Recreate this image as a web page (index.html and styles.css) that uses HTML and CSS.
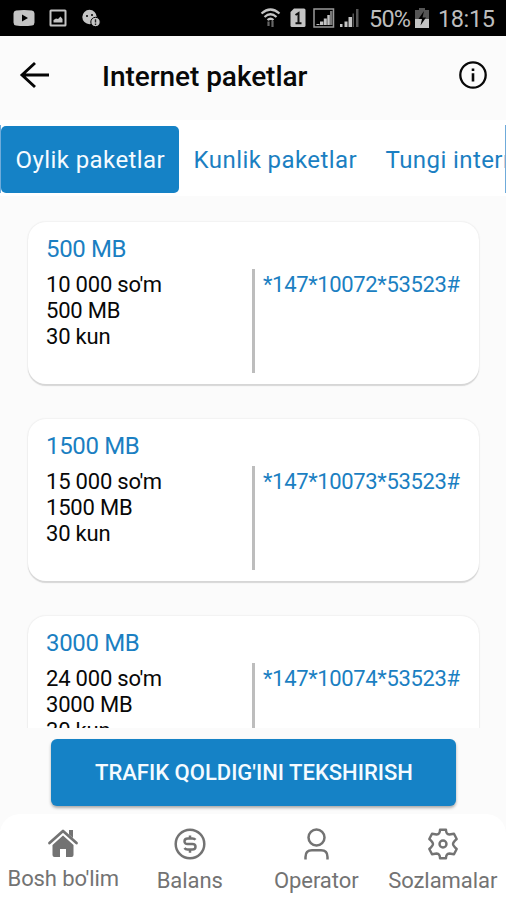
FILE: index.html
```html
<!DOCTYPE html>
<html lang="uz">
<head>
<meta charset="utf-8">
<meta name="viewport" content="width=device-width, initial-scale=1">
<title>Internet paketlar</title>
<link rel="stylesheet" href="styles.css">
</head>
<body>
<div class="app">
  <div class="status">
    <svg class="status-left" width="90" height="20" viewBox="0 0 90 20" fill="#c4c4c4">
      <path fill-rule="evenodd" d="M3 2.500Q11 1.500 19 2.500Q21.500 3 21.500 5.500V14.500Q21.500 17 19 17.500Q11 18.500 3 17.500Q.5 17 .5 14.500V5.500Q.5 3 3 2.500ZM9 6.500V13.500L15 10Z"/>
      <path fill-rule="evenodd" d="M38 1.500H52Q53.500 1.500 53.500 3V17Q53.500 18.500 52 18.500H38Q36.500 18.500 36.500 17V3Q36.500 1.500 38 1.500ZM38.500 3.500V16.500H51.500V3.500ZM40.500 14.500V12L43 10.500 45 11 47.500 8.500 49.500 11V14.500Z"/>
      <circle cx="76.500" cy="9" r="7.200"/>
      <circle cx="74" cy="8" r="1" fill="#000"/><circle cx="79" cy="7" r="1" fill="#000"/>
      <circle cx="82.500" cy="14" r="4.700" stroke="#000" stroke-width="1"/>
      <path d="M82.500 11.300V14.500M82.500 15.600V17" stroke="#222" stroke-width="1.400"/>
    </svg>
    <div class="status-right">
      <svg width="100" height="22" viewBox="0 0 100 22" fill="#c4c4c4">
        <g fill="none" stroke="#c4c4c4" stroke-width="2.200">
          <path d="M1.500 6.500Q10.500-1.500 19.500 6.500M4.500 10Q10.500 4.500 16.500 10"/>
          <path d="M7.500 13Q10.500 10.500 13.500 13"/>
          <path d="M8.500 14.500V19M12.500 14V20" stroke="#666"/>
        </g>
        <path d="M34 1.500H44Q45.500 1.500 45.500 3V18.500Q45.500 20 44 20H32Q30.500 20 30.500 18.500V5Z"/>
        <path d="M35.500 8L38.500 6V16M35.500 16.200H41.500" fill="none" stroke="#111" stroke-width="2"/>
        <path d="M54 2H73.500V20H54Z" fill="none" stroke="#999" stroke-width="1.500"/>
        <path d="M56.500 18V17H59.500V18ZM60 18V14.500H63.300V18ZM63.800 18V11.500H66.800V18ZM67.300 18V8H69.800V18Z"/>
        <path d="M70 18V4H72.500V18Z" fill="#777"/>
        <path d="M80 20V17H82.500V20ZM84.500 20V14.500H87.500V20ZM88.500 20V10H92V20Z"/>
        <path d="M92.500 20V6.500H94V20ZM96 20V2H98.500V20Z" fill="#555"/>
      </svg>
      <span class="battery-text">50%</span>
      <svg class="battery" width="16" height="22" viewBox="0 0 16 22">
        <path d="M5 1H11V3H15V21H1V3H5Z" fill="#555"/>
        <path d="M1 12H15V21H1Z" fill="#c4c4c4"/>
        <path d="M10 4L4.500 12H8L6.500 18.500 12 10.500H8.500Z" fill="#000"/>
      </svg>
      <span class="clock">18:15</span>
    </div>
  </div>

  <header class="header">
    <svg class="back" width="32" height="28" viewBox="0 0 32 28" fill="none" stroke="#050505" stroke-width="2.900"><path d="M17 2 4 14 17 26M4 14H31"/></svg>
    <h1 class="title">Internet paketlar</h1>
    <svg class="info" width="30" height="30" viewBox="0 0 30 30"><circle cx="15" cy="15" r="12.700" fill="none" stroke="#080808" stroke-width="2.300"/><path d="M13.700 8.500H16.300V11H13.700ZM13.700 13.200H16.300V21.500H13.700Z" fill="#080808"/></svg>
  </header>

  <nav class="tabs">
    <a class="tab tab-active">Oylik paketlar</a>
    <a class="tab">Kunlik paketlar</a>
    <a class="tab">Tungi internet</a>
  </nav>

  <main class="list">
    <article class="card">
      <h2 class="card-title">500 MB</h2>
      <div class="card-body">
        <div class="details">10 000 so'm<br>500 MB<br>30 kun</div>
        <div class="code">*147*10072*53523#</div>
      </div>
    </article>
    <article class="card">
      <h2 class="card-title">1500 MB</h2>
      <div class="card-body">
        <div class="details">15 000 so'm<br>1500 MB<br>30 kun</div>
        <div class="code">*147*10073*53523#</div>
      </div>
    </article>
    <article class="card">
      <h2 class="card-title">3000 MB</h2>
      <div class="card-body">
        <div class="details">24 000 so'm<br>3000 MB<br>30 kun</div>
        <div class="code">*147*10074*53523#</div>
      </div>
    </article>
  </main>

  <div class="action"><button class="button">TRAFIK QOLDIG'INI TEKSHIRISH</button></div>

  <footer class="bottom">
    <a class="item item-home">
      <svg width="32" height="32" viewBox="0 0 32 32"><path d="M2.500 16 16 4 29.500 16" fill="none" stroke="#737373" stroke-width="2.800" stroke-linecap="round" stroke-linejoin="round"/><path d="M22 3H26V11L22 7.500ZM16 8.500 26.500 18V28Q26.500 30 24.500 30H19V22H13V30H7.500Q5.500 30 5.500 28V18Z" fill="#737373"/></svg>
      <span class="label">Bosh bo'lim</span>
    </a>
    <a class="item">
      <svg width="32" height="32" viewBox="0 0 32 32" fill="none" stroke="#737373" stroke-width="2.500"><circle cx="16" cy="16" r="14.300"/><path d="M21.500 11.800Q20.500 10.500 18.500 10.500H13.800Q10.500 10.500 10.500 13.300T13.800 16H18.300Q21.500 16 21.500 18.700T18.300 21.500H13.500Q11.500 21.500 10.500 20M16 7.500V10.500M16 21.500V24.700"/></svg>
      <span class="label">Balans</span>
    </a>
    <a class="item">
      <svg width="32" height="32" viewBox="0 0 32 32" fill="none" stroke="#737373" stroke-width="2.500"><circle cx="16.500" cy="9.500" r="8"/><path d="M5.500 31.500V29Q5.500 22.300 12 22.300H21Q27.500 22.300 27.500 29V31.500"/></svg>
      <span class="label">Operator</span>
    </a>
    <a class="item">
      <svg width="32" height="32" viewBox="0 0 32 32" fill="none" stroke="#737373" stroke-width="2.400" stroke-linejoin="round"><path d="M13 1.700H19Q19 6.300 22.300 6.500L27 5.700 29.700 11Q26 14.300 26 16T29.700 21L27 26.300 22.300 25.500Q19 25.700 19 30.300H13Q13 25.700 9.700 25.500L5 26.300 2.300 21Q6 17.700 6 16T2.300 11L5 5.700 9.700 6.500Q13 6.300 13 1.700Z"/><circle cx="16" cy="16" r="3.500"/></svg>
      <span class="label">Sozlamalar</span>
    </a>
  </footer>
</div>
</body>
</html>
```
FILE: styles.css
```css
* { box-sizing: border-box; }
body { margin: 0; background: #fbfbfb; font-family: Roboto, "Liberation Sans", sans-serif; color: #080808; }
.app { width: 506px; height: 900px; display: flex; flex-direction: column; overflow: hidden; }
.status { height: 36px; flex: none; background: #000; display: flex; justify-content: space-between; padding: 0 11px 0 13px; color: #bdbdbd; }
.status-left { margin-top: 8px; }
.status-right { display: flex; padding-top: 7px; font-size: 23.5px; line-height: 24px; }
.battery-text { margin-left: 9px; width: 42px; letter-spacing: -.8px; }
.battery { margin-left: 3px; }
.clock { margin-left: 8px; width: 57px; letter-spacing: -.4px; white-space: nowrap; }
.header { height: 84px; flex: none; display: flex; align-items: center; padding: 0 18px; }
.back { margin-top: -6px; }
.title { margin: -2px 0 0 52px; font-size: 28px; line-height: 32px; font-weight: 500; letter-spacing: -.05px; }
.info { margin: -7px 0 0 auto; }
.tabs { height: 76px; flex: none; display: flex; padding-top: 6px; background: #fff; overflow: hidden; border-left: 1px solid #6fabda; border-right: 1px solid #6fabda; border-image: linear-gradient(transparent 6px, #6fabda 6px, #6fabda 72px, transparent 72px) 1; }
.tab { flex: none; height: 67px; line-height: 68px; padding: 0 14px 0 14.5px; font-size: 24px; letter-spacing: .42px; color: #1b7fc2; border-radius: 5px; white-space: nowrap; }
.tab-active { color: #f5fbff; background: #1582c6; }
.list { height: 532px; flex: none; padding: 26px 27px 0 28px; overflow: hidden; }
.card { height: 162px; margin-bottom: 35px; padding: 13px 18px; background: #fff; border-radius: 18px; box-shadow: 0 2px 1px #d6d6d6, 0 0 2px #dcdcdc; }
.card-title { margin: 0; font-size: 24px; line-height: 28px; font-weight: 400; letter-spacing: -.35px; color: #1b7fc2; }
.card-body { display: flex; height: 104px; margin-top: 6px; font-size: 22px; line-height: 26px; letter-spacing: -.2px; }
.details { flex: none; width: 206px; padding-top: 3px; }
.code { padding: 3px 0 0 8px; border-left: 3px solid #bdbdbd; color: #1b7fc2; letter-spacing: -.35px; }
.action { height: 86px; flex: none; padding: 11px 50px 0 51px; }
.button { width: 405px; height: 67px; border: 0; border-radius: 6px; background: #1582c6; color: #f5fbff; font: 500 22px/67px Roboto, "Liberation Sans", sans-serif; padding: 0 0 0 1px; box-shadow: 0 2px 3px #aaa; }
.bottom { flex: 1; display: grid; grid-template-columns: repeat(4, 1fr); background: #fff; border-radius: 20px 20px 0 0; }
.item { display: flex; flex-direction: column; align-items: center; padding-top: 14px; color: #737373; }
.item-home { padding-top: 13px; }
.label { margin-top: 8px; font-size: 22px; line-height: 26px; letter-spacing: -.05px; white-space: nowrap; }
.item-home .label { margin-top: 7px; letter-spacing: -.1px; }
```
